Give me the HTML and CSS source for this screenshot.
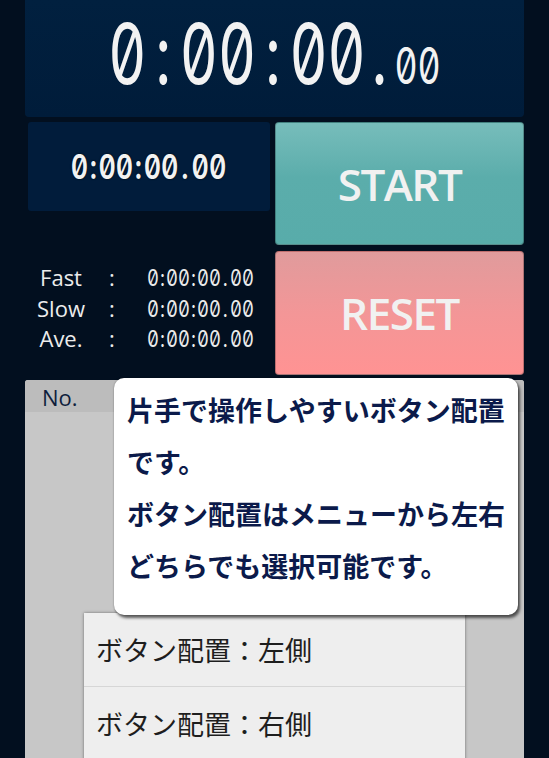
FILE: index.html
```html
<!DOCTYPE html>
<html lang="ja">
<head>
<meta charset="utf-8">
<title>Stopwatch</title>
<link rel="stylesheet" href="styles.css">
</head>
<body>
<div class="app">
  <div class="main-time">
    <span class="digits big">0<span class="c">:</span>00<span class="c">:</span>00<span class="d">.</span><span class="small">00</span></span>
  </div>
  <div class="controls">
    <div class="left">
      <div class="lap"><span class="digits lap-digits">0<span class="c">:</span>00<span class="c">:</span>00<span class="d">.</span>00</span></div>
      <div class="stats">
        <div class="label">Fast</div><div class="colon">:</div><div class="val"><span class="digits val-digits">0<span class="c">:</span>00<span class="c">:</span>00<span class="d">.</span>00</span></div>
        <div class="label">Slow</div><div class="colon">:</div><div class="val"><span class="digits val-digits">0<span class="c">:</span>00<span class="c">:</span>00<span class="d">.</span>00</span></div>
        <div class="label">Ave.</div><div class="colon">:</div><div class="val"><span class="digits val-digits">0<span class="c">:</span>00<span class="c">:</span>00<span class="d">.</span>00</span></div>
      </div>
    </div>
    <div class="right">
      <button class="btn start">START</button>
      <button class="btn reset">RESET</button>
    </div>
  </div>
  <div class="list">
    <div class="list-head"><span class="no">No.</span></div>
    <div class="menu">
      <div class="menu-item">ボタン配置：左側</div>
      <div class="menu-item">ボタン配置：右側</div>
    </div>
    <div class="tooltip">片手で操作しやすいボタン配置<br>です。<br>ボタン配置はメニューから左右<br>どちらでも選択可能です。</div>
  </div>
</div>
</body>
</html>
```

FILE: styles.css
```css
html, body {
  margin: 0;
  height: 758px;
  overflow: hidden;
  background: #020f1f;
}

.app {
  padding: 0 25px;
}

.main-time {
  height: 117px;
  background: linear-gradient(#01203f, #001c3a);
  border-radius: 0 0 4px 4px;
  display: flex;
  align-items: center;
  justify-content: center;
}

.digits {
  font-family: "Inter", sans-serif;
  font-feature-settings: "zero" 1, "tnum" 1;
  color: #f2f2f2;
  display: inline-block;
  white-space: nowrap;
}

.digits .c {
  padding: 0 0.15em;
}

.digits .d {
  padding: 0 0.12em 0 0.1em;
}

.big {
  font-size: 84px;
  line-height: 84px;
  padding-top: 2px;
  transform: scaleX(0.7);
}

.small {
  font-size: 51px;
}

.controls {
  display: grid;
  grid-template-columns: 245px 249px;
  column-gap: 5px;
  margin-top: 5px;
}

.lap {
  margin-left: 3px;
  height: 89px;
  background: #011c3b;
  border-radius: 3px;
  display: flex;
  align-items: center;
  justify-content: center;
}

.lap-digits {
  font-size: 34px;
  line-height: 34px;
  font-weight: 600;
  transform: scaleX(0.79);
  text-shadow: 0 0 2px #000;
}

.lap-digits .c {
  padding: 0 0.06em;
}

.stats {
  margin-top: 52px;
  display: grid;
  grid-template-columns: 72px 30px auto;
  line-height: 29.5px;
  color: #ececec;
  font-family: "Open Sans", sans-serif;
  font-size: 22px;
}

.label, .colon {
  text-align: center;
}

.val {
  padding-left: 20px;
}

.val-digits {
  font-size: 23px;
  color: #ececec;
  transform: scaleX(0.8);
  transform-origin: left center;
}

.val-digits .c {
  padding: 0 0.06em;
}

.right {
  display: flex;
  flex-direction: column;
  gap: 6px;
}

.btn {
  height: 123px;
  margin: 0;
  padding: 0;
  border: 1px solid rgba(0, 0, 0, 0.25);
  border-radius: 4px;
  font-family: "Open Sans", sans-serif;
  font-size: 44px;
  font-weight: 600;
  letter-spacing: -1.5px;
  color: #f1f1f1;
}

.start {
  background: linear-gradient(#77bdbb, #5badab 45%, #58acaa);
}

.reset {
  height: 124px;
  background: linear-gradient(#e09b9c, #f39697 50%, #ff9393);
}

.list {
  position: relative;
  margin-top: 5px;
  height: 378px;
  background: #c7c7c7;
  border-radius: 3px 3px 0 0;
}

.list-head {
  height: 32px;
  background: #bcbcbc;
  border-radius: 3px 3px 0 0;
  padding-left: 17px;
  font-family: "Open Sans", sans-serif;
  font-size: 22px;
  line-height: 34px;
  color: #0e1e3c;
}

.tooltip {
  position: absolute;
  left: 89px;
  top: -2px;
  width: 378px;
  padding: 6px 13px 23px 13px;
  background: #ffffff;
  border-radius: 10px;
  box-shadow: 2px 3px 3px rgba(0, 0, 0, 0.6), 0 0 2px rgba(0, 0, 0, 0.35);
  font-family: "Noto Sans CJK JP", sans-serif;
  font-size: 27px;
  font-weight: bold;
  line-height: 52px;
  color: #0b1a4a;
  white-space: nowrap;
  z-index: 2;
}

.menu {
  position: absolute;
  left: 59px;
  top: 233px;
  width: 381px;
  background: #eeeeee;
  box-shadow: 0 0 3px rgba(0, 0, 0, 0.45);
  z-index: 1;
}

.menu-item {
  height: 73px;
  border-bottom: 1px solid #d6d6d6;
  padding-left: 12px;
  display: flex;
  align-items: center;
  font-family: "Noto Sans CJK JP", sans-serif;
  font-size: 27px;
  color: #1e1e1e;
}
```
